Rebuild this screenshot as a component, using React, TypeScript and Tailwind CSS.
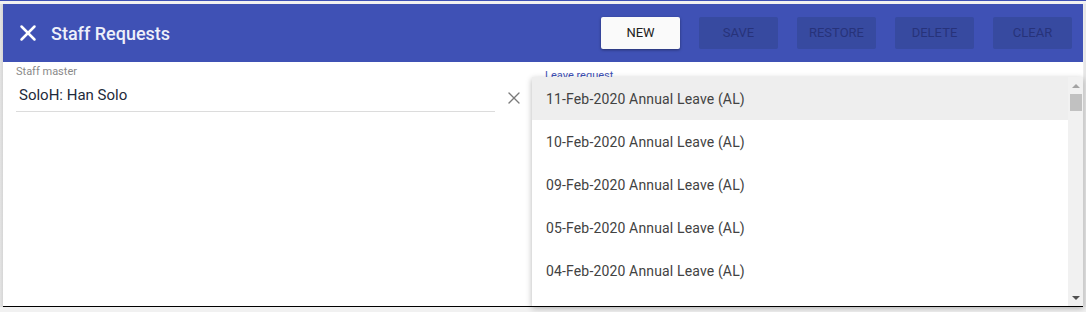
import { X } from "lucide-react";

const items = [
  "11-Feb-2020 Annual Leave (AL)",
  "10-Feb-2020 Annual Leave (AL)",
  "09-Feb-2020 Annual Leave (AL)",
  "05-Feb-2020 Annual Leave (AL)",
  "04-Feb-2020 Annual Leave (AL)",
];

const actions = ["SAVE", "RESTORE", "DELETE", "CLEAR"];

export default function App() {
  return (
    <div className="relative w-[1086px] h-[312px] overflow-hidden bg-[#f1f1f1] border-t border-[#3f51b5] font-['Roboto',sans-serif]">
      <div className="flex h-[306px] pt-[3px]">
        <div className="w-[3px] bg-gradient-to-r from-[#e4e4e4] to-[#d6d6d6]" />
        <div className="w-[1080px] flex flex-col bg-white">
          {/* HEADER */}
          <header className="h-[58px] shrink-0 bg-[#3f51b5] flex items-center pl-[12px] pr-[11px]">
            <X size={26} strokeWidth={2.3} className="text-white" />
            <h1 className="ml-[10px] text-[18px] font-medium text-[#eef0fa]">Staff Requests</h1>
            <div className="ml-auto flex gap-[19px]">
              <button className="w-[79px] h-[32px] bg-[#fafafa] rounded-[2px] shadow-[0_1px_3px_rgba(0,0,0,0.4)] text-[13px] font-normal text-[#212121]">
                NEW
              </button>
              {actions.map((a) => (
                <button
                  key={a}
                  className="w-[79px] h-[32px] bg-[#374aa0] rounded-[2px] text-[13px] font-normal text-[#27337a]"
                >
                  {a}
                </button>
              ))}
            </div>
          </header>

          {/* FORM */}
          <div className="flex-1 flex">
            <div className="w-[479px] ml-[13px] pt-[3px]">
              <div className="text-[11px] text-[#8a8a8a] leading-[14px]">Staff master</div>
              <div className="mt-[6px] pb-[6px] border-b border-[#dcdcdc] text-[15px] text-[#1e2a3a] pl-[3px] leading-[20px]">
                SoloH: Han Solo
              </div>
            </div>
            <div className="ml-[9px] pt-[26px]">
              <X size={20} strokeWidth={1.6} className="text-[#7a7a7a]" />
            </div>
            <div className="ml-[21px] pt-[7px] text-[11px] text-[#3f51b5] leading-[14px]">Leave request</div>
          </div>

          <div className="h-[1px] shrink-0 bg-black" />
        </div>
        <div className="w-[3px] bg-[#e6e6e6] border-l border-[#ececec]" />
      </div>

      {/* DROPDOWN */}
      <div className="absolute left-[532px] top-[76px] w-[551px] h-[229px] bg-white shadow-[0_2px_6px_rgba(0,0,0,0.3)] flex">
        <ul className="flex-1">
          {items.map((t, i) => (
            <li
              key={t}
              className={`h-[43px] flex items-center pl-[14px] pt-[1px] text-[14px] text-[#424242] tracking-[0.15px] ${i === 0 ? "bg-[#eeeeee]" : ""}`}
            >
              {t}
            </li>
          ))}
        </ul>
        <div className="w-[15px] bg-[#f1f1f1] flex flex-col items-center">
          <div className="mt-[7px] w-0 h-0 border-l-[4px] border-r-[4px] border-b-[4px] border-l-transparent border-r-transparent border-b-[#a3a3a3]" />
          <div className="mt-[6px] w-[12px] h-[17px] bg-[#c1c1c1]" />
          <div className="mt-auto mb-[6px] w-0 h-0 border-l-[4px] border-r-[4px] border-t-[4px] border-l-transparent border-r-transparent border-t-[#505050]" />
        </div>
      </div>
    </div>
  );
}
